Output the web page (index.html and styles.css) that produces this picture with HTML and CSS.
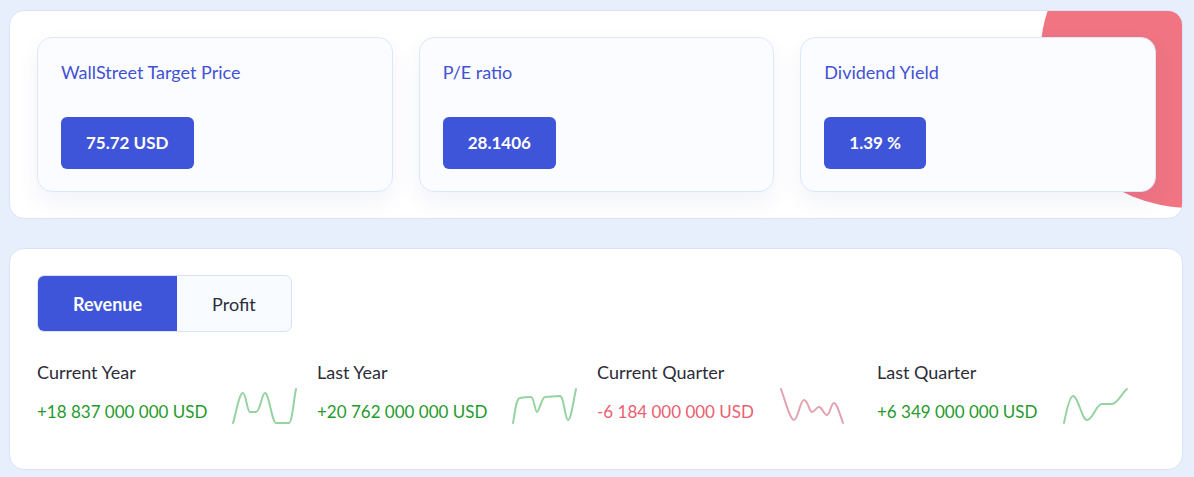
FILE: index.html
```html
<!DOCTYPE html>
<html lang="en">
<head>
    <meta charset="UTF-8">
    <meta name="viewport" content="width=device-width, initial-scale=1.0">
    <title>Stock Overview</title>
    <link rel="stylesheet" href="styles.css">
</head>
<body>
    <section class="panel highlights">
        <div class="blob"></div>

        <div class="metric-card">
            <h3 class="metric-title">WallStreet Target Price</h3>
            <div class="metric-value">75.72 USD</div>
        </div>

        <div class="metric-card">
            <h3 class="metric-title">P/E ratio</h3>
            <div class="metric-value">28.1406</div>
        </div>

        <div class="metric-card">
            <h3 class="metric-title">Dividend Yield</h3>
            <div class="metric-value">1.39 %</div>
        </div>
    </section>

    <section class="panel earnings">
        <div class="tabs">
            <button class="tab active">Revenue</button>
            <button class="tab">Profit</button>
        </div>

        <div class="stats">
            <div class="stat">
                <div class="stat-text">
                    <div class="stat-label">Current Year</div>
                    <div class="stat-value up">+18 837 000 000 USD</div>
                </div>
                <svg class="spark up" viewBox="0 0 64 36" width="64" height="36">
                    <path d="M0,35 C3,26 6,5 10,5 C13,5 14,24 17,24 L23,24 C27,24 29,5 32,5 C36,5 39,35 43,35 L56,35 C59,35 61,10 63,1"/>
                </svg>
            </div>

            <div class="stat">
                <div class="stat-text">
                    <div class="stat-label">Last Year</div>
                    <div class="stat-value up">+20 762 000 000 USD</div>
                </div>
                <svg class="spark up" viewBox="0 0 64 36" width="64" height="36">
                    <path d="M0,35 C2,25 3,10 7,10 C11,9 15,9 18,9 C21,9 22,24 24,24 C26,24 29,9 32,9 L47,8 C51,8 52,32 55,32 C58,32 61,10 63,1"/>
                </svg>
            </div>

            <div class="stat">
                <div class="stat-text">
                    <div class="stat-label">Current Quarter</div>
                    <div class="stat-value down">-6 184 000 000 USD</div>
                </div>
                <svg class="spark down" viewBox="0 0 64 36" width="64" height="36">
                    <path d="M1,1 C5,12 10,32 14,32 C18,32 20,12 24,12 C28,12 29,24 32,24 C35,24 36,19 39,19 C42,19 44,27 47,27 C50,27 51,15 54,15 C57,15 60,27 63,35"/>
                </svg>
            </div>

            <div class="stat">
                <div class="stat-text">
                    <div class="stat-label">Last Quarter</div>
                    <div class="stat-value up">+6 349 000 000 USD</div>
                </div>
                <svg class="spark up" viewBox="0 0 64 36" width="64" height="36">
                    <path d="M0,35 C3,20 6,8 9,8 C14,8 18,32 23,32 C29,32 32,16 38,16 L48,16 C53,16 58,5 63,1"/>
                </svg>
            </div>
        </div>
    </section>
</body>
</html>
```

FILE: styles.css
```css
* {
    margin: 0;
    padding: 0;
    box-sizing: border-box;
}

body {
    font-family: 'Lato', 'Noto Sans', sans-serif;
    background: #e8effc;
    padding: 10px 11px 10px 9px;
    color: #2d2d3a;
}

.panel {
    background: #fff;
    border: 1px solid #d8e3f8;
    border-radius: 15px;
}

.highlights {
    position: relative;
    overflow: hidden;
    display: grid;
    grid-template-columns: repeat(3, 1fr);
    gap: 26px;
    padding: 26px 26px 26px 27px;
}

/* decorative circle peeking out of the top right corner */
.blob {
    position: absolute;
    width: 300px;
    height: 300px;
    border-radius: 50%;
    background: #f07482;
    top: -103px;
    right: -158px;
}

.metric-card {
    position: relative;
    background: #fafcff;
    border: 1px solid #dde7fa;
    border-radius: 15px;
    padding: 22px 23px 22px;
    box-shadow: 0 10px 22px rgba(70, 90, 170, 0.07);
}

.metric-title {
    font-size: 18px;
    font-weight: 400;
    line-height: 24px;
    color: #4352d2;
    margin-bottom: 33px;
}

.metric-value {
    display: inline-block;
    background: #3e55d9;
    color: #fff;
    font-size: 17px;
    font-weight: 700;
    line-height: 52px;
    height: 52px;
    padding: 0 25px;
    border-radius: 6px;
}

.earnings {
    margin-top: 29px;
    padding: 26px 27px 45px;
}

.tabs {
    display: inline-flex;
    border: 1px solid #d8e3f8;
    border-radius: 7px;
    overflow: hidden;
    background: #f8fbff;
}

.tab {
    font-family: inherit;
    font-size: 18px;
    font-weight: 400;
    height: 55px;
    padding: 0 35px;
    border: none;
    background: transparent;
    color: #2d2d3a;
    cursor: pointer;
}

.tab.active {
    background: #3e55d9;
    color: #fff;
    font-weight: 700;
}

.stats {
    display: grid;
    grid-template-columns: repeat(4, 280px);
    margin-top: 28px;
}

.stat {
    display: flex;
    align-items: flex-end;
    gap: 26px;
}

.stat-label {
    font-size: 18px;
    line-height: 24px;
    color: #2d2d3a;
    margin-bottom: 16px;
}

.stat-value {
    font-size: 17px;
    line-height: 24px;
}

.stat-value.up { color: #1f9b2c; }
.stat-value.down { color: #e9606f; }

.spark {
    flex-shrink: 0;
    overflow: visible;
}

.spark path {
    fill: none;
    stroke-width: 2;
    stroke-linecap: round;
    stroke-linejoin: round;
}

.spark.up path { stroke: #95d3a0; }
.spark.down path { stroke: #e3a2b0; }
```
